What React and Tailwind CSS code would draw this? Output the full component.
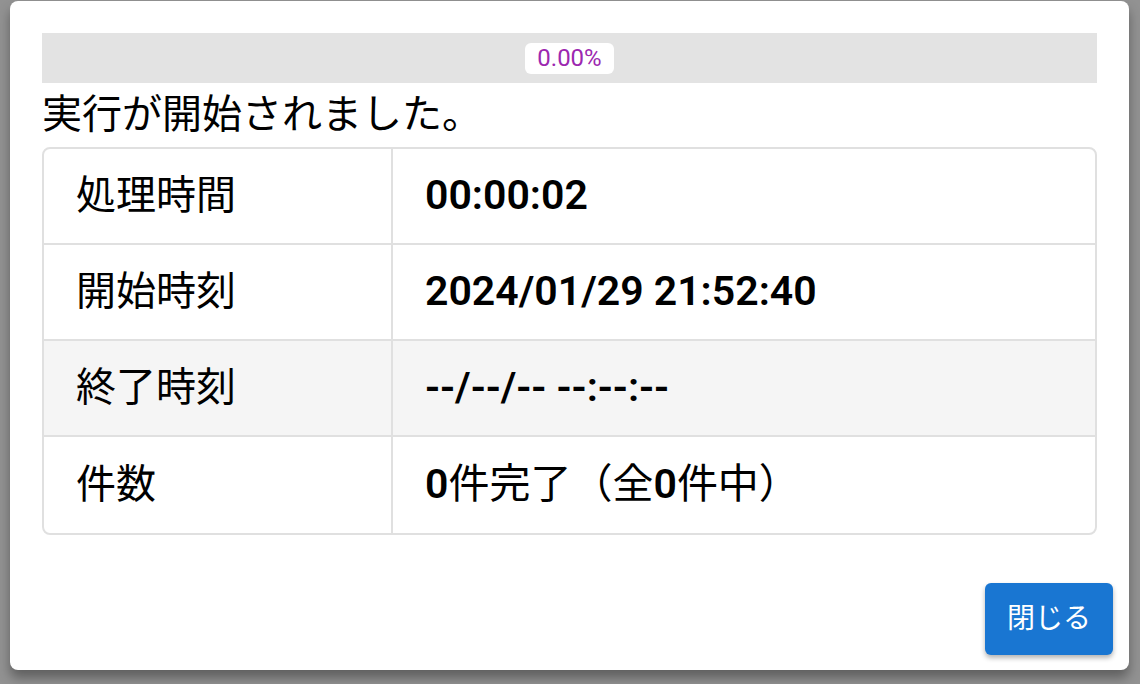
import React from 'react';

const rows = [
  { label: '処理時間', value: <b className="font-semibold">00:00:02</b> },
  { label: '開始時刻', value: <b className="font-semibold">2024/01/29 21:52:40</b> },
  { label: '終了時刻', value: <b className="font-semibold">--/--/-- --:--:--</b>, shaded: true },
  {
    label: '件数',
    value: (
      <span>
        <b className="font-semibold">0</b>件完了（全<b className="font-semibold">0</b>件中）
      </span>
    ),
  },
];

export default function App() {
  return (
    <div
      className="w-[1140px] h-[684px] bg-[#929292] pl-[10px] pt-[1px]"
      style={{ fontFamily: 'Roboto, "Noto Sans CJK JP", sans-serif' }}
    >
      <div className="w-[1119px] h-[669px] bg-white rounded-lg shadow-[0_8px_12px_rgba(0,0,0,0.35)] px-[32px] pt-[32px] flex flex-col">
        {/* progress */}
        <div className="h-[50px] bg-[#e3e3e3] flex items-center justify-center">
          <div className="h-[31px] px-[12px] bg-white rounded-md flex items-center text-[24px] text-[#9c27b0]">
            0.00%
          </div>
        </div>

        <div className="h-[64px] flex items-center text-[40px] text-black leading-none">
          実行が開始されました。
        </div>

        {/* details */}
        <div className="border-2 border-[#e0e0e0] rounded-lg overflow-hidden">
          {rows.map((r, i) => (
            <div
              key={r.label}
              className={`flex h-[96px] ${i < rows.length - 1 ? 'border-b-2 border-[#e0e0e0]' : ''} ${r.shaded ? 'bg-[#f5f5f5]' : ''}`}
            >
              <div className="w-[349px] border-r-2 border-[#e0e0e0] pl-[32px] flex items-center text-[40px] text-black">
                {r.label}
              </div>
              <div className="flex-1 pl-[32px] flex items-center text-[41px] text-black">
                {r.value}
              </div>
            </div>
          ))}
        </div>

        <div className="flex-1 flex items-end justify-end pb-[15px] -mr-[16px]">
          <button className="h-[72px] px-[22px] bg-[#1976d2] text-white text-[28px] rounded-md shadow-[0_3px_5px_rgba(0,0,0,0.3)]">
            閉じる
          </button>
        </div>
      </div>
    </div>
  );
}
